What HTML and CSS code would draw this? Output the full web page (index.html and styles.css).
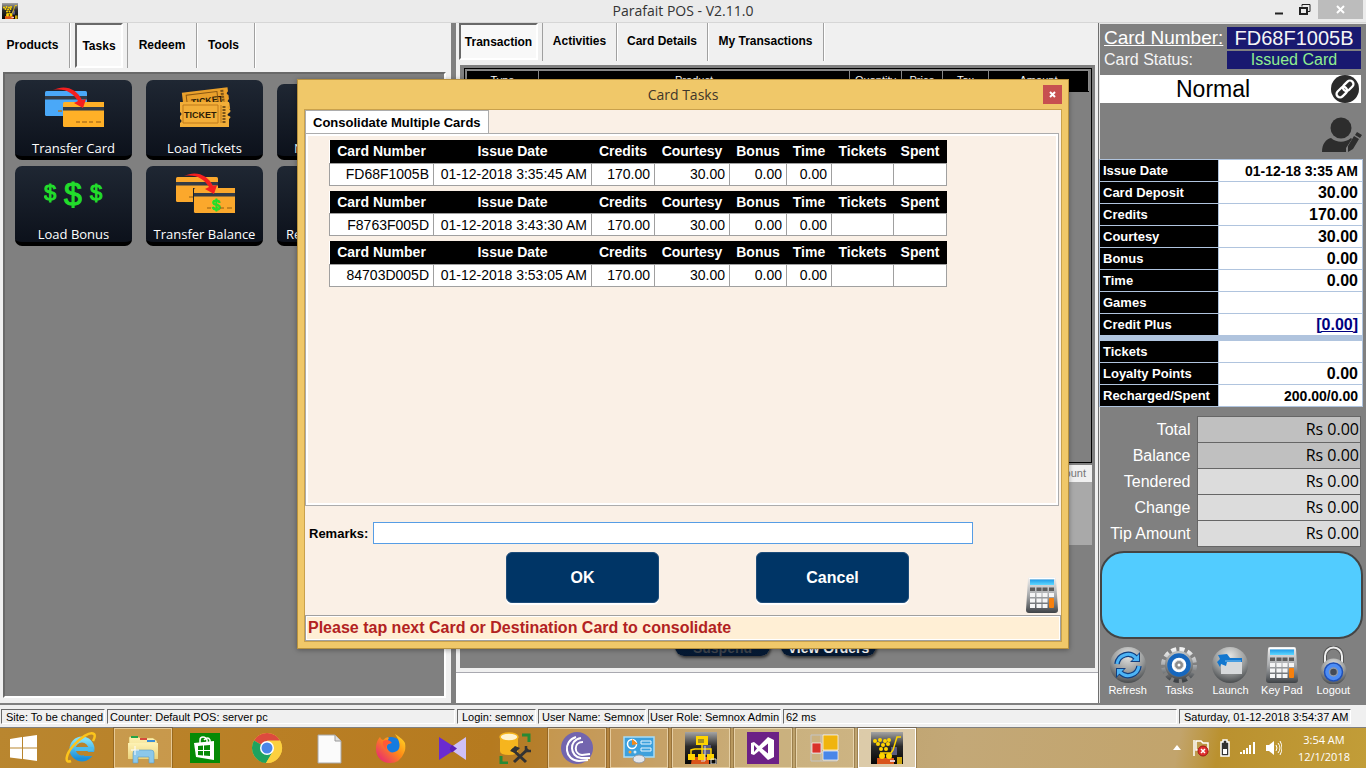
FILE: index.html
```html
<!DOCTYPE html>
<html lang="en">
<head>
<meta charset="utf-8">
<title>Parafait POS - V2.11.0</title>
<link rel="stylesheet" href="styles.css">
</head>
<body>
<svg class="defs" aria-hidden="true">
  <defs>
    <linearGradient id="steel" x1="0" y1="0" x2="0" y2="1"><stop offset="0" stop-color="#f2f2f2"/><stop offset=".5" stop-color="#a9abad"/><stop offset="1" stop-color="#3f4347"/></linearGradient>
    <radialGradient id="ball" cx=".5" cy=".25" r=".8"><stop offset="0" stop-color="#e4e4e2"/><stop offset=".55" stop-color="#9a9c9c"/><stop offset="1" stop-color="#3c3f42"/></radialGradient>
    <linearGradient id="blk" x1="0" y1="0" x2="0" y2="1"><stop offset="0" stop-color="#a5a5a5"/><stop offset=".45" stop-color="#2a2a2a"/><stop offset="1" stop-color="#050505"/></linearGradient>
    <linearGradient id="lcd" x1="0" y1="0" x2="0" y2="1"><stop offset="0" stop-color="#1f9be8"/><stop offset="1" stop-color="#5fd8ff"/></linearGradient>
    <linearGradient id="foldg" x1="0" y1="0" x2="0" y2="1"><stop offset="0" stop-color="#fdf2b4"/><stop offset="1" stop-color="#ecd27a"/></linearGradient>
    <linearGradient id="ieg" x1="0" y1="0" x2="0" y2="1"><stop offset="0" stop-color="#7fe0fb"/><stop offset="1" stop-color="#1b8fd8"/></linearGradient>
    <linearGradient id="ffg" x1="1" y1="0" x2="0" y2="1"><stop offset="0" stop-color="#ffe226"/><stop offset=".45" stop-color="#ff8a16"/><stop offset="1" stop-color="#e31587"/></linearGradient>
    <symbol id="calc" viewBox="0 0 32 36">
      <path d="M4 0h24q2 0 2 2l2 31q0 3-3 3H3q-3 0-3-3L2 2q0-2 2-2z" fill="url(#steel)"/>
      <path d="M3 1.500h26" stroke="#fff"/>
      <rect x="4" y="2.500" width="24" height="5.500" fill="url(#lcd)"/>
      <g fill="#5c5c5c"><path d="M4 10.500h5v3.500H4zM10.500 10.500h5v3.500h-5zM16.500 10.500h5v3.500h-5zM23 10.500h5v3.500h-5z"/></g>
      <g fill="#f5f5f5"><path d="M4 16h5v4H4zM10.500 16h5v4h-5zM16.500 16h5v4h-5zM23 16h5v4h-5zM4 21.500h5v4H4zM10.500 21.500h5v4h-5zM16.500 21.500h5v4h-5zM4 27h5v4H4zM10.500 27h5v4h-5zM16.500 27h5v4h-5z"/></g>
      <rect x="23" y="21" width="5" height="10" rx="1" fill="#f7800c"/>
    </symbol>
    <symbol id="cart" viewBox="0 0 32 32">
      <rect width="32" height="32" fill="url(#blk)"/>
      <path d="M6 26h17v6H6z" fill="#d9541a"/><path d="M20 15h6v8h-6z" fill="#5b5c80"/><path d="M26 25h5v7h-5z" fill="#caa40c"/><path d="M19 28h5v2h-5z" fill="#e8c9c9"/>
      <g fill="#ffd400"><circle cx="4" cy="9" r="2"/><circle cx="9" cy="8" r="2"/><circle cx="14" cy="9" r="2"/><circle cx="18" cy="8" r="2"/><circle cx="7" cy="12" r="2"/><circle cx="12" cy="13" r="2"/><circle cx="17" cy="12" r="2"/><circle cx="10" cy="17" r="2"/><circle cx="15" cy="17" r="2"/><circle cx="11" cy="24" r="3"/><circle cx="18" cy="24" r="3"/></g>
      <path d="M30 5h-4l-4 13-2 3H9" fill="none" stroke="#ffd400" stroke-width="1.500"/>
    </symbol>
    <symbol id="cardshape" viewBox="0 0 42 25">
      <rect width="42" height="25" rx="1.500"/><rect y="5" width="42" height="3.500" fill="#333b46"/><path d="M13 20h4m2 0h5m2 0h4m3 0h5" stroke="#b5751b" stroke-width="1.500"/>
    </symbol>
    <symbol id="swoop" viewBox="0 0 34 22">
      <path d="M0 3C12-3 24 2 29 13l4-1-3 9-9-5 4-2C20 6 12 1 0 3z" fill="#f51f1f"/>
    </symbol>
  </defs>
</svg>

<div class="screen">
  <header class="titlebar">
    <svg class="app-icon"><use href="#cart"/></svg>
    <h1 class="title">Parafait POS - V2.11.0</h1>
    <div class="window-controls">
      <button class="wc" aria-label="Minimize"><svg width="10" height="12"><path d="M1 9.500h8" stroke="#222" stroke-width="2"/></svg></button>
      <button class="wc" aria-label="Restore"><svg width="12" height="12" fill="none" stroke="#222"><path d="M3 2.500V.5h8v7H9"/><path d="M1 4h7v6H1z" stroke-width="2"/></svg></button>
      <button class="wc wc-close" aria-label="Close"><svg width="10" height="10"><path d="M1 1l7 7M8 1L1 8" stroke="#fff" stroke-width="2"/></svg></button>
    </div>
  </header>

  <main class="workspace">
    <section class="left">
      <nav class="tabs tabs-left">
        <button class="tab tab-products">Products</button>
        <button class="tab active tab-tasks">Tasks</button>
        <button class="tab tab-redeem">Redeem</button>
        <button class="tab tab-tools">Tools</button>
      </nav>
      <div class="task-panel">
        <button class="task">
          <svg viewBox="0 0 60 40" width="60" height="40"><use href="#cardshape" x="1" y="4" width="42" height="25" fill="#4aa8f8"/><use href="#cardshape" x="19" y="15" width="42" height="25" fill="#ffb027"/><use href="#swoop" x="9" y="0" width="34" height="22"/></svg>
          <span>Transfer Card</span>
        </button>
        <button class="task">
          <svg viewBox="0 0 60 42" width="60" height="42">
            <g transform="rotate(-7 30 14)"><path d="M8 3h46v4q-3 2 0 4v4q-3 2 0 4v6H8z" fill="#e9a02b"/><path d="M12 6h31v12H12z" fill="none" stroke="#8a5712"/><text x="16" y="17" class="tk">TICKET</text><path d="M48 5v17" stroke="#7c5418" stroke-width="3" stroke-dasharray="2 1"/></g>
            <path d="M5 15h49v4q-3 1 0 3t0 4 0 3 0 3v8H5v-4q3-2 0-4v-3q3-2 0-4z" fill="#f2ae38"/><path d="M8 18h35v18H8zM46 18v18" fill="none" stroke="#c07b1a"/><text x="9" y="31" class="tk">TICKET</text><path d="M49 19v17" stroke="#7c5418" stroke-width="3" stroke-dasharray="2 1"/>
          </svg>
          <span>Load Tickets</span>
        </button>
        <button class="task task-cut">
          <span>N</span>
        </button>
        <button class="task">
          <svg viewBox="0 0 60 40" width="60" height="40"><g class="usd"><text x="6" y="27" font-size="22" text-anchor="middle">$</text><text x="29" y="32" font-size="32" text-anchor="middle">$</text><text x="52" y="27" font-size="22" text-anchor="middle">$</text></g></svg>
          <span>Load Bonus</span>
        </button>
        <button class="task">
          <svg viewBox="0 0 60 40" width="60" height="40"><use href="#cardshape" x="1" y="4" width="42" height="25" fill="#fba82c"/><path d="M18 15h42v25H18z" fill="#1a212c"/><use href="#cardshape" x="19" y="15" width="42" height="25" fill="#fba82c"/><use href="#swoop" x="9" y="0" width="34" height="22"/><text class="usd" x="41" y="37" font-size="15" text-anchor="middle">$</text></svg>
          <span>Transfer Balance</span>
        </button>
        <button class="task task-cut2">
          <span>Re</span>
        </button>
      </div>
    </section>

    <div class="splitter"></div>

    <section class="center">
      <nav class="tabs tabs-center">
        <button class="tab active tab-trx">Transaction</button>
        <button class="tab tab-act">Activities</button>
        <button class="tab tab-det">Card Details</button>
        <button class="tab tab-my">My Transactions</button>
      </nav>
      <div class="trx-panel">
        <div class="trx-grid">
          <table class="trx-table">
            <colgroup><col class="c-type"><col><col class="c-qty"><col class="c-price"><col class="c-tax"><col class="c-amt"></colgroup>
            <thead><tr><th>Type</th><th>Product</th><th>Quantity</th><th>Price</th><th>Tax</th><th>Amount</th></tr></thead>
          </table>
        </div>
        <div class="sum-grid"><div class="sum-head">Amount</div></div>
        <div class="trx-actions">
          <button class="pill" disabled>Suspend</button>
          <button class="pill">View Orders</button>
        </div>
      </div>
      <div class="message-box"></div>
    </section>

    <aside class="right">
      <div class="card-head">
        <a href="#" class="card-no-label">Card Number:</a><span class="card-no">FD68F1005B</span>
        <span class="card-st-label">Card Status:</span><span class="card-st">Issued Card</span>
      </div>
      <div class="card-type">
        <span>Normal</span>
        <button class="round-btn" aria-label="Link card"><svg viewBox="0 0 28 28" width="28" height="28"><circle cx="14" cy="14" r="14" fill="#2b2b2b"/><g fill="none" stroke="#fff" stroke-width="2.300" transform="rotate(-45 14 14)"><rect x="3.500" y="10.500" width="12" height="7" rx="3.500"/><rect x="12.500" y="10.500" width="12" height="7" rx="3.500"/></g></svg></button>
      </div>
      <div class="customer">
        <button class="round-btn" aria-label="Edit customer"><svg viewBox="0 0 40 35" width="40" height="35" fill="#2d2d2d"><circle cx="19" cy="11" r="10.500"/><path d="M0 35c0-8 4-13 9-14 6 5 14 5 20 0l1 1-6 9v4z"/><path d="M35 15l5 3-2 3-5-3zM32 19l5 3-6 10-5 3v-6z"/></svg></button>
      </div>
      <table class="info">
        <tbody>
          <tr><th scope="row">Issue Date</th><td class="small">01-12-18 3:35 AM</td></tr>
          <tr><th scope="row">Card Deposit</th><td>30.00</td></tr>
          <tr><th scope="row">Credits</th><td>170.00</td></tr>
          <tr><th scope="row">Courtesy</th><td>30.00</td></tr>
          <tr><th scope="row">Bonus</th><td>0.00</td></tr>
          <tr><th scope="row">Time</th><td>0.00</td></tr>
          <tr><th scope="row">Games</th><td></td></tr>
          <tr><th scope="row">Credit Plus</th><td><a href="#">[0.00]</a></td></tr>
          <tr class="gap"><td colspan="2"></td></tr>
          <tr><th scope="row">Tickets</th><td></td></tr>
          <tr><th scope="row">Loyalty Points</th><td>0.00</td></tr>
          <tr><th scope="row">Recharged/Spent</th><td class="small">200.00/0.00</td></tr>
        </tbody>
      </table>
      <table class="totals">
        <tbody>
          <tr><th scope="row">Total</th><td>Rs 0.00</td></tr>
          <tr><th scope="row">Balance</th><td>Rs 0.00</td></tr>
          <tr class="light"><th scope="row">Tendered</th><td>Rs 0.00</td></tr>
          <tr class="light"><th scope="row">Change</th><td>Rs 0.00</td></tr>
          <tr class="light"><th scope="row">Tip Amount</th><td>Rs 0.00</td></tr>
        </tbody>
      </table>
      <div class="display"></div>
      <div class="tools">
        <button class="tool"><svg viewBox="0 0 38 38"><circle cx="19" cy="19" r="18" fill="url(#ball)"/><g fill="none" stroke="#123f80" stroke-width="5.500"><path d="M8 18a11 11 0 0 1 19-6"/><path d="M30 20a11 11 0 0 1-19 6"/></g><path d="M31 6v10H21zM7 32V22h10z" fill="#123f80"/><g fill="none" stroke="#4db4f5" stroke-width="3"><path d="M8 18a11 11 0 0 1 19-6"/><path d="M30 20a11 11 0 0 1-19 6"/></g><path d="M30 8v7h-7zM8 30v-7h7z" fill="#4db4f5"/></svg><span>Refresh</span></button>
        <button class="tool"><svg viewBox="0 0 38 38"><circle cx="19" cy="19" r="15.500" fill="none" stroke="url(#steel)" stroke-width="5" stroke-dasharray="5 3.110"/><circle cx="19" cy="19" r="14" fill="url(#ball)"/><circle cx="19" cy="19" r="9.500" fill="#fff" stroke="#1767bd" stroke-width="4.500"/><circle cx="19" cy="19" r="4.500" fill="#8d8d8d" stroke="#ddd"/><circle cx="19" cy="19" r="1.500" fill="#fff"/></svg><span>Tasks</span></button>
        <button class="tool"><svg viewBox="0 0 38 38"><circle cx="19" cy="19" r="18" fill="url(#ball)"/><path d="M10 14h21v14H10z" fill="#d7d9db"/><path d="M7 9l9-1 3 4h12v4H16l-1 4-5-2-1 3-3-5 3-3z" fill="#1377cf"/><path d="M14 15h16" stroke="#7cc4f2"/></svg><span>Launch</span></button>
        <button class="tool"><svg viewBox="-1 -1 34 38"><use href="#calc" width="32" height="36"/></svg><span>Key Pad</span></button>
        <button class="tool"><svg viewBox="0 0 38 38"><path d="M11 17V10a8.500 8.500 0 0 1 17 0v7" fill="none" stroke="#555" stroke-width="4"/><path d="M11 17V10a8.500 8.500 0 0 1 17 0v7" fill="none" stroke="#efefef" stroke-width="2"/><circle cx="19.500" cy="25.500" r="13" fill="url(#ball)"/><circle cx="19.500" cy="26" r="9" fill="#4d8df6" stroke="#1f4fb5" stroke-width="1.500"/><circle cx="19.500" cy="26" r="4" fill="#444b57" stroke="#8e98a8" stroke-width="1.500"/></svg><span>Logout</span></button>
      </div>
    </aside>
  </main>

  <footer class="statusbar">
    <span class="cell s-site">Site: To be changed</span>
    <span class="cell s-counter">Counter: Default POS: server pc</span>
    <span class="cell s-login">Login: semnox</span>
    <span class="cell s-user">User Name: Semnox</span>
    <span class="cell s-role">User Role: Semnox Admin</span>
    <span class="cell s-ms">62 ms</span>
    <span class="cell s-date">Saturday, 01-12-2018 3:54:37 AM</span>
  </footer>

  <nav class="taskbar">
    <button class="start" aria-label="Start"><svg viewBox="0 0 28 26" width="28" height="26" fill="#fff"><path d="M0 4l12-2v10.500H0zM13 2l14-2v12.500H13zM0 13.500h12V24L0 22.500zM13 13.500h14V26l-14-2z"/></svg></button>
    <button class="app" aria-label="Internet Explorer"><svg viewBox="0 0 32 32"><circle cx="17" cy="17" r="9.500" fill="none" stroke="url(#ieg)" stroke-width="6"/><path d="M10 17h18" stroke="#4dbdec" stroke-width="4"/><path d="M19 20h12v4H19z" fill="#b9842b"/><path d="M6 29c-7 3-5-7 2-15S25-1 29 2c2 2 0 5-1 7" fill="none" stroke="#fcc41c" stroke-width="2.500"/></svg></button>
    <button class="app open" aria-label="File Explorer"><svg viewBox="0 0 32 32"><path d="M2 5l6-1 6 2h12l4 3v18H2z" fill="url(#foldg)" stroke="#c9a94c" stroke-width=".5"/><path d="M4 4h7v2H4z" fill="#22a447"/><path d="M13 6h7v2h-7z" fill="#d64b3c"/><path d="M20 8h8v2h-8z" fill="#3a8fd8"/><path d="M1 11h30v16H1z" fill="url(#foldg)"/><path d="M6 31V21q0-3 3-3h15q3 0 3 3v10h-5v-6H11v6z" fill="#8cc8ea" stroke="#5a9cc5" stroke-width=".6"/><path d="M8 14v9M4 18h8" stroke="#fff"/></svg></button>
    <button class="app" aria-label="Store"><svg viewBox="0 0 32 32"><path d="M1 1h30v30H1z" fill="#068a06"/><path d="M11 11V8q0-3 3-3t4 3v3M15 8q4-4 6 0v2" fill="none" stroke="#fff" stroke-width="1.500"/><path d="M5 11l20-2v19L7 25z" fill="#fff"/><path d="M9 14l5-.5V18H9zM15 13.500l6-.5v5h-6zM9 19h5v4.500L9 23zM15 19h6v5l-6-.5z" fill="#068a06"/></svg></button>
    <button class="app" aria-label="Chrome"><svg viewBox="0 0 32 32"><circle cx="16" cy="16" r="15" fill="#fcd03f"/><path d="M16 16L3 8.500A15 15 0 0 1 29 8.500z" fill="#dd4b3e"/><path d="M16 16L3 8.500A15 15 0 0 0 15 31l7-12z" fill="#1fa25f"/><path d="M16 8.500h13A15 15 0 0 1 15 31l8-13z" fill="#fcd03f"/><circle cx="16" cy="16" r="7" fill="#fff"/><circle cx="16" cy="16" r="5.500" fill="#4a86e8"/></svg></button>
    <button class="app" aria-label="Document"><svg viewBox="0 0 32 32"><path d="M5 3h17l6 6v22H5z" fill="#fbfbfb" stroke="#a8a8a8"/><path d="M22 3v6h6" fill="#e0e0e0" stroke="#999"/></svg></button>
    <button class="app" aria-label="Firefox"><svg viewBox="0 0 32 32"><circle cx="16" cy="17" r="12" fill="#167be0"/><path d="M1 17C1 9 4 6 5 5q1 3 3 3 4-4 6-2-3 3 2 5-5 1-4 5 3 7 10 3 6-5-2-17 8 5 10 9 1 6-1 10-4 10-14 10C7 31 1 25 1 17z" fill="url(#ffg)"/><path d="M8 9q6-3 9 2l-4 1q-3 3-1 6-5-3-4-9z" fill="#ff5a36"/></svg></button>
    <button class="app" aria-label="Visual Studio"><svg viewBox="0 0 32 32"><path d="M2 5v23l18-11.500z" fill="#6a2bd0"/><path d="M29 5v23L12 16.500z" fill="#cfc0f7"/><path d="M15 13l5 3.500-5 4-3-4z" fill="#5a20b8"/></svg></button>
    <button class="app" aria-label="Database tools"><svg viewBox="0 0 32 32"><path d="M1 5v14q0 4 9 4t9-4V5z" fill="#f6b51e"/><ellipse cx="10" cy="5" rx="9" ry="4" fill="#fff3cf" stroke="#f6b51e" stroke-width="1.500"/><path d="M23 3h7v7M2 24v7h7" fill="none" stroke="#278a35" stroke-width="3"/><path d="M15 30l14-13M13 17l14 13" stroke="#333" stroke-width="3"/><path d="M11 19l5-5 5 2-5 5z" fill="#333"/><path d="M27 14v5h5" fill="none" stroke="#333" stroke-width="2.500"/></svg></button>
    <button class="app open" aria-label="BitTorrent"><svg viewBox="0 0 32 32"><circle cx="16" cy="16" r="16" fill="#7365ae"/><g fill="none" stroke="#fff" stroke-width="2"><path d="M15 5C1 9 4 29 18 29l9-1"/><path d="M20 6C7 8 9 25 20 26h9"/><path d="M22 10c-10 0-9 12-1 13l8-1"/></g></svg></button>
    <button class="app open" aria-label="Control Panel"><svg viewBox="0 0 32 32"><path d="M1 5h30v20H1z" fill="#3da0dc" stroke="#a7dcf8" stroke-width="1.500"/><circle cx="9" cy="12" r="4.500" fill="none" stroke="#fff" stroke-width="1.500"/><path d="M9 7l6 5-6 1z" fill="#f58a1a"/><path d="M18 9h10v3H18zM18 16h10v3H18z" fill="none" stroke="#e8f6ff"/><circle cx="7" cy="20" r="1.500" fill="#ff9c32"/><circle cx="12" cy="20" r="1.500" fill="#cdeeff"/><ellipse cx="16" cy="27" rx="6" ry="4" fill="#e4e6ea" stroke="#9298a3"/></svg></button>
    <button class="app open" aria-label="Parafait Server"><svg viewBox="0 0 32 32"><path d="M0 0h32v32H0z" fill="url(#blk)"/><path d="M7 25h17v7H6z" fill="#d9541a"/><path d="M17 13h9v10h-9z" fill="#5b5c80"/><path d="M11 4h12v9H11zM3 22h7v6H3zM13 22h7v6h-7zM22 22h7v6h-7z" fill="#ffd400"/><path d="M17 13v9M6 22v-4q4-2 20-1v5" fill="none" stroke="#ffd400" stroke-width="1.500"/><path d="M13 8h6M13 10h6" stroke="#444"/><path d="M20 14v15h-4M26 27h5v5h-5z" stroke="#ddd" fill="none"/></svg></button>
    <button class="app open" aria-label="Visual Studio 2012"><svg viewBox="0 0 32 32"><path d="M0 0h32v32H0z" fill="#6c2186"/><path d="M4 11l3-1 5 4 9-9 6 3v17l-6 3-9-9-5 4-3-1zM7 13v7l3-3.500zM15 16.500l6 5v-10z" fill="#fff" fill-rule="evenodd"/></svg></button>
    <button class="app open" aria-label="Forms application"><svg viewBox="0 0 32 32"><path d="M2 3h26v26H2zM12 3v26M2 21h26" fill="none" stroke="#c4c4c4"/><path d="M3 11h9v10H3z" fill="#d9332a" stroke="#fff" stroke-width=".7"/><path d="M14 3h15v15H14z" fill="#f0b40e" stroke="#fff" stroke-width=".7"/><path d="M14 19h15v9H14z" fill="#4a86e8" stroke="#fff" stroke-width=".7"/></svg></button>
    <button class="app open current" aria-label="Parafait POS"><svg><use href="#cart"/></svg></button>
    <div class="tray">
      <svg width="10" height="6" viewBox="0 0 10 6"><path d="M5 0l4 5H1z" fill="#fff"/></svg>
      <svg width="18" height="18" viewBox="0 0 18 18"><path d="M2 1v16" stroke="#fff" stroke-width="1.500"/><path d="M4 2h5l2 2h5v7H4z" fill="none" stroke="#fff" stroke-width="1.500"/><circle cx="11" cy="12" r="5" fill="#e03030" stroke="#a01515"/><path d="M9 10l4 4M13 10l-4 4" stroke="#fff" stroke-width="1.500"/></svg>
      <svg width="10" height="18" viewBox="0 0 10 18"><path d="M1 3h2V1h4v2h2v14H1z" fill="#333" stroke="#fff" stroke-width="1.500"/><path d="M3 10h4v5H3z" fill="#fff"/></svg>
      <svg width="16" height="14" viewBox="0 0 16 14" fill="#fff"><path d="M0 11h2v2H0zM3 9h2v4H3zM6 7h2v6H6zM9 4h2v9H9zM13 1h2v12h-2z"/></svg>
      <svg width="16" height="16" viewBox="0 0 16 16" fill="#fff"><path d="M0 5h3l5-4v14l-5-4H0z"/><path d="M10 5q2 3 0 6M12 3q4 5 0 10M14 1q4 7 0 14" fill="none" stroke="#fff"/></svg>
      <div class="clock"><span>3:54 AM</span><span>12/1/2018</span></div>
    </div>
  </nav>

  <div class="overlay">
    <section class="dialog" role="dialog" aria-labelledby="dlg-title">
      <header class="dlg-head">
        <h2 id="dlg-title">Card Tasks</h2>
        <button class="dlg-close" aria-label="Close"><svg width="7" height="7"><path d="M1 1l5 5M6 1L1 6" stroke="#fff" stroke-width="2"/></svg></button>
      </header>
      <div class="dlg-body">
        <div class="dlg-tabs"><button class="dlg-tab">Consolidate Multiple Cards</button></div>
        <div class="dlg-page">
          <table class="cards">
            <colgroup><col class="w-num"><col class="w-date"><col class="w-cred"><col class="w-court"><col class="w-bon"><col class="w-time"><col class="w-tick"><col class="w-spent"></colgroup>
            <thead><tr><th>Card Number</th><th>Issue Date</th><th>Credits</th><th>Courtesy</th><th>Bonus</th><th>Time</th><th>Tickets</th><th>Spent</th></tr></thead>
            <tbody><tr><td>FD68F1005B</td><td>01-12-2018 3:35:45 AM</td><td>170.00</td><td>30.00</td><td>0.00</td><td>0.00</td><td></td><td></td></tr></tbody>
          </table>
          <table class="cards">
            <colgroup><col class="w-num"><col class="w-date"><col class="w-cred"><col class="w-court"><col class="w-bon"><col class="w-time"><col class="w-tick"><col class="w-spent"></colgroup>
            <thead><tr><th>Card Number</th><th>Issue Date</th><th>Credits</th><th>Courtesy</th><th>Bonus</th><th>Time</th><th>Tickets</th><th>Spent</th></tr></thead>
            <tbody><tr><td>F8763F005D</td><td>01-12-2018 3:43:30 AM</td><td>170.00</td><td>30.00</td><td>0.00</td><td>0.00</td><td></td><td></td></tr></tbody>
          </table>
          <table class="cards">
            <colgroup><col class="w-num"><col class="w-date"><col class="w-cred"><col class="w-court"><col class="w-bon"><col class="w-time"><col class="w-tick"><col class="w-spent"></colgroup>
            <thead><tr><th>Card Number</th><th>Issue Date</th><th>Credits</th><th>Courtesy</th><th>Bonus</th><th>Time</th><th>Tickets</th><th>Spent</th></tr></thead>
            <tbody><tr><td>84703D005D</td><td>01-12-2018 3:53:05 AM</td><td>170.00</td><td>30.00</td><td>0.00</td><td>0.00</td><td></td><td></td></tr></tbody>
          </table>
        </div>
        <div class="remarks"><label for="remarks">Remarks:</label><input id="remarks" type="text"></div>
        <div class="dlg-actions">
          <button class="btn">OK</button>
          <button class="btn">Cancel</button>
          <button class="keypad" aria-label="Key pad"><svg width="32" height="36"><use href="#calc"/></svg></button>
        </div>
        <p class="dlg-msg">Please tap next Card or Destination Card to consolidate</p>
      </div>
    </section>
  </div>
</div>
</body>
</html>
```
FILE: styles.css
```css
* { box-sizing: border-box; }
body { margin: 0; font-family: "Liberation Sans", Arial, sans-serif; font-size: 12px; color: #000; }
button { font: inherit; color: inherit; background: none; border: 0; padding: 0; }
table { border-collapse: collapse; }
h1, h2, p { margin: 0; }
svg { display: block; flex: none; }
.defs { position: absolute; width: 0; height: 0; }

.screen { position: relative; display: flex; flex-direction: column; min-height: 100vh; background: #f0f0f0; overflow: hidden; }

/* title bar */
.titlebar { display: grid; grid-template-columns: 1fr auto 1fr; align-items: center; height: 23px; background: #ebebeb; border-bottom: 1px solid #d6d6d6; }
.app-icon { width: 16px; height: 16px; margin-left: 2px; }
.title { font: 14px/22px "Open Sans", sans-serif; color: #333; }
.window-controls { display: flex; justify-content: flex-end; align-self: start; padding-right: 3px; }
.wc { width: 26px; height: 19px; display: flex; align-items: center; justify-content: center; }
.wc-close { width: 45px; background: #bcbcbc; }

/* workspace */
.workspace { flex: 1; display: grid; grid-template-columns: minmax(0, 451fr) 5px minmax(0, 642fr) 268px; }
.splitter { background: #808080; }
.left, .center { display: flex; flex-direction: column; background: #f0f0f0; }
.tabs { display: flex; font-weight: bold; }
.tab { padding-bottom: 2px; border-right: 1px solid #a0a0a0; box-shadow: 1px 0 #fff; line-height: 14px; }
.tab.active { padding-bottom: 0; background: #f8f8f8; border: 2px solid #fff; border-top-color: #696969; border-left-color: #696969; box-shadow: none; }
.tabs-left { height: 45px; }
.tab-products { width: 70px; padding-right: 4px; }
.tab-tasks { width: 48px; margin-left: 5px; }
.tab-redeem { width: 70px; margin-left: 4px; border-left: 1px solid #a0a0a0; }
.tab-tools { width: 58px; padding-right: 4px; }
.task-panel { flex: 1; display: grid; grid-template-columns: repeat(3, 117px); grid-auto-rows: 80px; gap: 6px 14px; align-content: start; margin: 4px 5px 5px 3px; padding: 6px 10px; background: #808080; border: 2px solid #696969; border-right-color: #fff; border-bottom-color: #fff; overflow: hidden; }
.task { display: flex; flex-direction: column; align-items: center; justify-content: space-between; padding: 7px 0 1px; border-radius: 7px; border-bottom: 4px solid #000; background: linear-gradient(#1f2733, #0c111b); color: #fff; font: 13px/14px "Open Sans", sans-serif; white-space: nowrap; }
.task-cut, .task-cut2 { justify-content: flex-end; align-items: flex-start; padding-left: 9px; }
.task-cut { margin-top: 4px; padding-left: 17px; }
.tk { font: bold 9px "Liberation Sans", sans-serif; fill: #2b1a05; }
.usd { font-family: "Liberation Sans", sans-serif; fill: #22dd2b; stroke: #22dd2b; }

.tabs-center { height: 38px; padding-left: 3px; }
.tab-trx { width: 79px; height: 37px; margin-right: 4px; }
.tab-act { width: 75px; border-left: 1px solid #a0a0a0; }
.tab-det { width: 91px; }
.tab-my { width: 116px; }
.trx-panel { flex: 1; display: flex; flex-direction: column; margin: 4px 3px 4px 4px; padding: 3px 3px 12px 4px; background: #808080; }
.trx-grid { flex: 1; border: 1px solid #000; padding: 1px; }
.trx-table { width: calc(100% - 1px); table-layout: fixed; background: #000; color: #fff; }
.trx-table th { height: 21px; padding: 0 0 2px; font-size: 11px; line-height: 13px; font-weight: normal; border: 1px solid #888; border-bottom-color: #000; }
.c-type { width: 72px; } .c-qty { width: 52px; } .c-price { width: 41px; } .c-tax { width: 46px; } .c-amt { width: 100px; }
.sum-grid { height: 80px; margin: 2px 0 0; background: #a9a9a9; }
.sum-head { height: 17px; padding-right: 6px; background: #f0f0f0; color: #777; text-align: right; font-size: 11px; line-height: 17px; }
.trx-actions { display: flex; justify-content: center; gap: 11px; padding: 76px 5px 0 0; }
.pill { width: 95px; height: 35px; padding-top: 20px; border-radius: 9px; background: linear-gradient(#003a70, #06172f); box-shadow: 1px 2px 3px #333; color: #fff; font-size: 14px; line-height: 15px; font-weight: bold; }
.pill:disabled { color: #3f454e; }
.message-box { height: 31px; background: #fff; border-top: 1px solid #a9a9b0; }

/* card side panel */
.right { display: flex; flex-direction: column; padding: 2px 3px 0 0; background: #808080; border-left: 1px solid #6f6f6f; box-shadow: inset 1px 1px #e6e6e6; }
.card-head { display: grid; grid-template-columns: 1fr 134px; gap: 1px 0; padding: 2px 2px 6px 5px; color: #f5f5f5; font-size: 16px; line-height: 18px; }
.card-no-label { color: #fff; font-size: 19px; line-height: 22px; }
.card-no, .card-st { text-align: center; background: #191970; }
.card-no { font-size: 20px; line-height: 22px; margin-bottom: 1px; }
.card-st { color: #90ee90; }
.card-type { display: grid; grid-template-columns: 1fr 30px; align-items: center; height: 28px; margin: 0 2px 0 1px; background: #fff; }
.card-type span { padding-left: 76px; font-size: 23px; }
.customer { display: flex; justify-content: flex-end; align-items: center; height: 56px; padding: 6px 1px 0; }
.info { width: 100%; table-layout: fixed; font-weight: bold; background: #fff; }
.info tr { height: 22px; }
.info th, .info td { padding: 0 4px 0 3px; border: 1px solid #b0c4de; line-height: 20px; }
.info th { width: 119px; background: #000; color: #fff; text-align: left; font-size: 13px; }
.info td { text-align: right; font-size: 16px; }
.info td.small { font-size: 14px; }
.info a { color: #000080; }
.info tr.gap { height: 5px; }
.info .gap td { padding: 0; background: #b0c4de; line-height: 0; }
.totals { width: 262px; margin-top: 9px; font-size: 16px; }
.totals tr { height: 26px; }
.totals th { width: 98px; padding: 0 6px 0 0; font-weight: normal; text-align: right; color: #fff; }
.totals td { padding: 0 1px 2px; border: 1px solid #666; background: #c0c0c0; text-align: right; font-family: "Open Sans", sans-serif; line-height: 20px; }
.totals .light td { background: #dcdcdc; }
.display { flex: 1; min-height: 60px; margin: 4px 0 0 1px; border: 2px solid #444; border-radius: 24px; background: #52ccff; }
.tools { display: grid; grid-template-columns: repeat(5, 1fr); padding: 7px 4px 6px 3px; color: #fff; font-size: 11px; }
.tool { display: flex; flex-direction: column; align-items: center; line-height: 13px; white-space: nowrap; }
.tool svg { width: 38px; height: 38px; }

/* status bar */
.statusbar { display: flex; gap: 2px; height: 25px; padding: 4px 15px 3px 1px; border-top: 2px solid #808080; border-bottom: 1px solid #808080; background: #f0f0f0; font-size: 11px; line-height: 15px; }
.cell { padding-left: 4px; border: 1px solid #fff; border-top-color: #696969; border-left-color: #696969; white-space: nowrap; }
.s-site { width: 104px; } .s-counter { width: 348px; padding-left: 2px; } .s-login { width: 79px; } .s-user { width: 108px; padding-left: 3px; }
.s-role { width: 133px; padding-left: 1px; } .s-ms { flex: 1; padding-left: 2px; } .s-date { width: 172px; }

/* taskbar */
.taskbar { display: flex; gap: 4px; height: 40px; background: linear-gradient(100deg, #b9862f 0, #b97f25 20%, #b57a1f 36%, #b58540 45%, #bba069 56%, #c3a877 70%, #c2a46c 86%, #ba912f 89%, #c29d38 100%); }
.start { width: 48px; display: flex; justify-content: center; align-items: center; }
.app { width: 58px; display: flex; justify-content: center; align-items: center; border: 1px solid transparent; }
.app svg { width: 32px; height: 32px; }
.app.open { border-color: rgba(255, 240, 210, .55); background: rgba(255, 235, 200, .22); outline: 1px solid rgba(80, 50, 10, .3); }
.app.current { border-color: #fff; background: rgba(255, 250, 240, .45); }
.tray { display: flex; flex: 1; justify-content: flex-end; align-items: center; gap: 10px; padding-right: 16px; }
.clock { display: flex; flex-direction: column; align-items: center; margin-left: 6px; color: #fff; font: 11px/17px "Open Sans", sans-serif; }

/* dialog */
.overlay { position: absolute; inset: 0 0 40px; display: flex; align-items: center; justify-content: center; }
.dialog { width: 772px; padding: 0 6px; padding-bottom: 6px; background: #f0c869; border: 1px solid #b8923f; box-shadow: 0 1px 5px rgba(0, 0, 0, .35); }
.dlg-head { display: grid; grid-template-columns: 1fr auto 1fr; align-items: center; height: 29px; }
.dlg-head h2 { grid-column: 2; font: 14px/28px "Open Sans", sans-serif; color: #40362a; }
.dlg-close { justify-self: end; width: 19px; height: 19px; display: flex; align-items: center; justify-content: center; background: #c75050; }
.dlg-body { background: #faf0e6; border: 1px solid #c9a14c; }
.dlg-tabs { display: flex; height: 23px; }
.dlg-tab { height: 23px; padding: 0 7px; background: #fff; border: 1px solid #acacac; border-bottom: 0; font-size: 13px; font-weight: bold; }
.dlg-page { display: flex; flex-direction: column; align-items: flex-start; gap: 5px; min-height: 373px; margin-right: 2px; padding: 6px 23px; border: 1px solid #acacac; box-shadow: inset 0 0 0 2px #fff; }
.cards { width: 618px; table-layout: fixed; font-size: 14px; background: #fff; }
.cards th { height: 23px; padding: 0; background: #000; color: #fff; line-height: 22px; }
.cards td { height: 22px; padding: 0 4px 0 0; border: 1px solid #a0a0a0; text-align: right; line-height: 20px; white-space: nowrap; }
.w-num { width: 104px; } .w-date { width: 158px; } .w-cred { width: 63px; } .w-court { width: 75px; } .w-bon { width: 57px; } .w-time { width: 45px; } .w-tick { width: 62px; }
.remarks { display: flex; align-items: center; gap: 5px; padding: 16px 88px 0 4px; font-size: 13px; font-weight: bold; }
.remarks input { flex: 1; height: 22px; border: 1px solid #569de5; background: #fff; }
.dlg-actions { display: grid; grid-template-columns: 153px 153px 1fr; column-gap: 97px; align-items: start; padding: 8px 3px 0 201px; height: 71px; }
.btn { height: 51px; border: 1px solid #1d4c7a; border-radius: 6px; background: #003566; box-shadow: 0 2px 1px #fff; color: #fff; font-size: 16px; font-weight: bold; }
.keypad { justify-self: end; align-self: end; padding-bottom: 2px; }
.dlg-msg { height: 26px; padding: 0 2px; border: 1px solid #a0a0a0; box-shadow: inset 0 0 0 1px #fff; background: #ffefd5; color: #b22222; font-size: 16px; font-weight: bold; line-height: 24px; }
```
